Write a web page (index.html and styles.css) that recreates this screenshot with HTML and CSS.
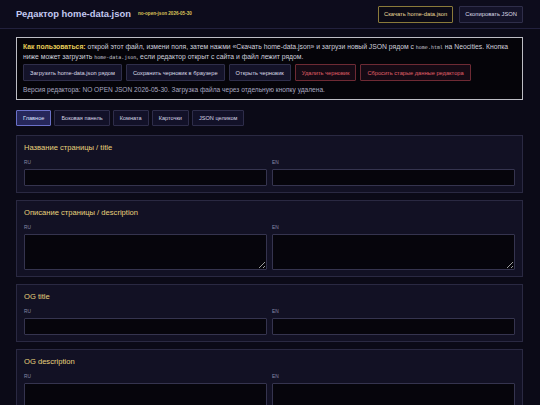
FILE: index.html
```html
<!DOCTYPE html>
<html lang="ru">
  <head>
    <meta charset="UTF-8" />
    <meta name="viewport" content="width=device-width, initial-scale=1" />
    <title>Редактор home-data.json</title>
    <link rel="stylesheet" href="styles.css">
  </head>
  <body>
    <header class="topbar">
      <div class="brand">
        <h1>Редактор home-data.json</h1>
        <span class="build">no-open-json 2026-05-30</span>
      </div>
      <div class="top-actions">
        <button class="btn btn-gold" type="button">Скачать home-data.json</button>
        <button class="btn" type="button">Скопировать JSON</button>
      </div>
    </header>

    <main class="container">
      <section class="notice">
        <p class="notice-text">
          <b>Как пользоваться:</b> открой этот файл, измени поля, затем нажми «Скачать home-data.json» и загрузи новый JSON рядом с <code>home.html</code> на Neocities. Кнопка ниже может загрузить <code>home-data.json</code>, если редактор открыт с сайта и файл лежит рядом.
        </p>
        <div class="notice-actions">
          <button class="btn" type="button">Загрузить home-data.json рядом</button>
          <button class="btn" type="button">Сохранить черновик в браузере</button>
          <button class="btn" type="button">Открыть черновик</button>
          <button class="btn btn-danger" type="button">Удалить черновик</button>
          <button class="btn btn-danger" type="button">Сбросить старые данные редактора</button>
        </div>
        <p class="notice-version">Версия редактора: NO OPEN JSON 2026-05-30. Загрузка файла через отдельную кнопку удалена.</p>
      </section>

      <nav class="tabs" aria-label="Разделы">
        <button class="tab active" type="button">Главное</button>
        <button class="tab" type="button">Боковая панель</button>
        <button class="tab" type="button">Комната</button>
        <button class="tab" type="button">Карточки</button>
        <button class="tab" type="button">JSON целиком</button>
      </nav>

      <section class="card">
        <h2>Название страницы / title</h2>
        <div class="fields">
          <label class="field"><span>RU</span><input type="text" /></label>
          <label class="field"><span>EN</span><input type="text" /></label>
        </div>
      </section>

      <section class="card">
        <h2>Описание страницы / description</h2>
        <div class="fields">
          <label class="field"><span>RU</span><textarea></textarea></label>
          <label class="field"><span>EN</span><textarea></textarea></label>
        </div>
      </section>

      <section class="card">
        <h2>OG title</h2>
        <div class="fields">
          <label class="field"><span>RU</span><input type="text" /></label>
          <label class="field"><span>EN</span><input type="text" /></label>
        </div>
      </section>

      <section class="card">
        <h2>OG description</h2>
        <div class="fields">
          <label class="field"><span>RU</span><textarea></textarea></label>
          <label class="field"><span>EN</span><textarea></textarea></label>
        </div>
      </section>
    </main>
  </body>
</html>
```

FILE: styles.css
```css
:root {
  --bg: #0b0a17;
  --panel: #121124;
  --panel-border: #2a2942;
  --field: #06050c;
  --field-border: #35344f;
  --text: #d4d4e4;
  --muted: #8a8aa8;
  --gold: #e8d27c;
  --lavender: #c3c8f0;
}
* {
  box-sizing: border-box;
}
body {
  margin: 0;
  background: var(--bg);
  color: var(--text);
  font-family: "Liberation Sans", Arial, sans-serif;
  font-size: 7px;
  line-height: 1.3;
}

/* Top bar */
.topbar {
  display: flex;
  align-items: center;
  justify-content: space-between;
  height: 29px;
  padding: 0 17px 0 16px;
  border-bottom: 1px solid #22213d;
  background: #0d0c1c;
}
.brand {
  display: flex;
  align-items: center;
  gap: 7px;
}
.brand h1 {
  margin: 0;
  font-size: 9.4px;
  font-weight: 700;
  color: var(--lavender);
}
.build {
  font-size: 4.6px;
  font-weight: 700;
  color: #dcc35a;
}
.top-actions {
  display: flex;
  gap: 6px;
}
.top-actions .btn {
  height: 17px;
  padding: 0 5px;
  font-size: 5.8px;
}

/* Buttons */
.btn {
  font-family: inherit;
  font-size: 5.7px;
  color: #dcdce8;
  background: #141329;
  border: 1px solid #2f2e4a;
  border-radius: 1px;
  padding: 0 6px;
  height: 17px;
  cursor: pointer;
}
.btn-gold {
  background: #0b0a15;
  border-color: #8a7a3a;
  color: #eadb9c;
}
.btn-danger {
  background: #150a14;
  border-color: #6e2a34;
  color: #e0606a;
}

.container {
  padding: 8px 17px 20px 16px;
}

/* Help box */
.notice {
  background: #050409;
  border: 1px solid #bdbdc4;
  padding: 4px 6px 5px;
}
.notice-text {
  margin: 0;
  font-size: 6.8px;
  line-height: 9.5px;
  color: #cfcfdc;
}
.notice-text b {
  color: #e8cf5a;
}
.notice-text code {
  font-family: "DejaVu Sans Mono", monospace;
  font-size: 5px;
  line-height: 1;
}
.notice-actions {
  display: flex;
  flex-wrap: wrap;
  gap: 4px;
  margin: 3px 0 4px;
}
.notice-version {
  margin: 0;
  font-size: 6.6px;
  line-height: 9px;
  color: #a8a8c0;
}

/* Tabs */
.tabs {
  display: flex;
  gap: 3px;
  margin: 10px 0 9px;
}
.tab {
  font-family: inherit;
  font-size: 5.6px;
  color: #d4d4e4;
  background: #121128;
  border: 1px solid #2e2d4a;
  border-radius: 1px;
  height: 16px;
  padding: 0 6px;
}
.tab.active {
  background: #26275a;
  border-color: #6a70c8;
  color: #dfe2ff;
}

/* Field cards */
.card {
  background: var(--panel);
  border: 1px solid var(--panel-border);
  padding: 7px 7px 6px;
  margin-bottom: 7px;
}
.card h2 {
  margin: 0 0 6px;
  font-size: 7.6px;
  line-height: 10px;
  font-weight: 400;
  color: var(--gold);
}
.fields {
  display: grid;
  grid-template-columns: 1fr 1fr;
  gap: 5px;
}
.field {
  display: flex;
  flex-direction: column;
  gap: 3px;
}
.field span {
  font-size: 4.8px;
  line-height: 7px;
  color: var(--muted);
}
.field input,
.field textarea {
  display: block;
  width: 100%;
  background: var(--field);
  border: 1px solid var(--field-border);
  border-radius: 1px;
  color: var(--text);
  font-family: inherit;
}
.field input {
  height: 17px;
}
.field textarea {
  height: 36px;
  resize: vertical;
}
```
